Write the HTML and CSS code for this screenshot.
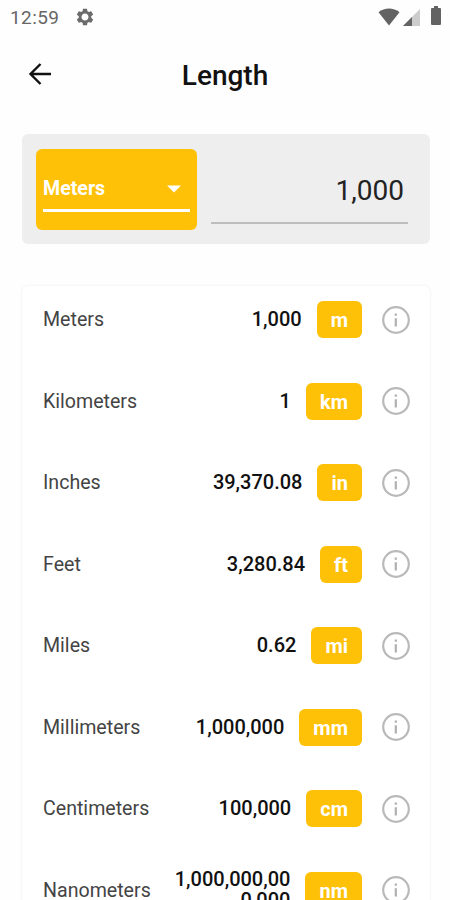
FILE: index.html
```html
<!DOCTYPE html>
<html lang="en">
  <head>
    <meta charset="UTF-8" />
    <meta name="viewport" content="width=device-width, initial-scale=1.0" />
    <title>Length</title>
    <link rel="stylesheet" href="styles.css">
  </head>
  <body>
    <!-- icon shared by every row -->
    <svg class="defs" width="0" height="0">
      <symbol id="info" viewBox="0 0 28 28">
        <circle cx="14" cy="14" r="12.8" fill="none" stroke="#b9b9b9" stroke-width="2.2" />
        <path d="M12.700 12.200h2.200v8.200h-2.200zM12.700 7.600h2.200v2.200h-2.200z" fill="#b0b0b0" />
      </symbol>
    </svg>

    <div class="status-bar">
      <span class="clock">12:59</span>
      <svg class="gear" width="20" height="20" viewBox="0 0 24 24">
        <path fill="#6b6b6b" fill-rule="evenodd" d="M19.43 12.98c.04-.32.07-.64.07-.98s-.03-.66-.07-.98l2.11-1.65c.19-.15.24-.42.12-.64l-2-3.46c-.12-.22-.39-.3-.61-.22l-2.49 1c-.52-.4-1.08-.73-1.69-.98l-.38-2.65C14.46 2.18 14.25 2 14 2h-4c-.25 0-.46.18-.49.42l-.38 2.65c-.61.25-1.17.59-1.69.98l-2.49-1c-.23-.09-.49 0-.61.22l-2 3.46c-.13.22-.07.49.12.64l2.11 1.65c-.04.32-.07.65-.07.98s.03.66.07.98l-2.11 1.65c-.19.15-.24.42-.12.64l2 3.46c.12.22.39.3.61.22l2.49-1c.52.4 1.08.73 1.69.98l.38 2.65c.03.24.24.42.49.42h4c.25 0 .46-.18.49-.42l.38-2.65c.61-.25 1.17-.59 1.69-.98l2.49 1c.23.09.49 0 .61-.22l2-3.46c.12-.22.07-.49-.12-.64l-2.11-1.65zM12 16.2c-2.300 0-4.200-1.900-4.200-4.200s1.900-4.200 4.200-4.200 4.200 1.900 4.200 4.200-1.900 4.200-4.200 4.200z" />
      </svg>
      <svg class="wifi" width="22" height="18" viewBox="0 0 22 18">
        <path fill="#636363" d="M0.500 4.200C6.500-.6 15.500-.6 21.500 4.200L11 17.500z" />
      </svg>
      <svg class="signal" width="17" height="17" viewBox="0 0 17 17">
        <path fill="#cccccc" d="M17 0v17H0z" />
        <path fill="#636363" d="M9 8v9H0z" />
      </svg>
      <svg class="battery" width="10" height="19" viewBox="0 0 10 19">
        <path fill="#636363" d="M3 0h4v2h2q1 0 1 1v15q0 1-1 1H1q-1 0-1-1V3q0-1 1-1h2z" />
      </svg>
    </div>

    <div class="top-bar">
      <svg class="back" width="24" height="24" viewBox="0 0 24 24">
        <path d="M23 12H3M12.500 2L2.500 12L12.500 22" fill="none" stroke="#111" stroke-width="2.400" />
      </svg>
      <h1>Length</h1>
    </div>

    <div class="input-panel">
      <div class="unit-select">
        <div class="unit-field">
          <span>Meters</span>
          <svg width="14" height="8" viewBox="0 0 14 8">
            <path d="M0 0.500h14L7 7.500z" fill="#fff" />
          </svg>
        </div>
      </div>
      <div class="amount">1,000</div>
    </div>

    <ul class="results">
      <li>
        <span class="name">Meters</span>
        <span class="value">1,000</span>
        <span class="badge">m</span>
        <svg class="info"><use href="#info" /></svg>
      </li>
      <li>
        <span class="name">Kilometers</span>
        <span class="value">1</span>
        <span class="badge">km</span>
        <svg class="info"><use href="#info" /></svg>
      </li>
      <li>
        <span class="name">Inches</span>
        <span class="value">39,370.08</span>
        <span class="badge">in</span>
        <svg class="info"><use href="#info" /></svg>
      </li>
      <li>
        <span class="name">Feet</span>
        <span class="value">3,280.84</span>
        <span class="badge">ft</span>
        <svg class="info"><use href="#info" /></svg>
      </li>
      <li>
        <span class="name">Miles</span>
        <span class="value">0.62</span>
        <span class="badge">mi</span>
        <svg class="info"><use href="#info" /></svg>
      </li>
      <li>
        <span class="name">Millimeters</span>
        <span class="value">1,000,000</span>
        <span class="badge">mm</span>
        <svg class="info"><use href="#info" /></svg>
      </li>
      <li>
        <span class="name">Centimeters</span>
        <span class="value">100,000</span>
        <span class="badge">cm</span>
        <svg class="info"><use href="#info" /></svg>
      </li>
      <li>
        <span class="name">Nanometers</span>
        <span class="value">1,000,000,000,000</span>
        <span class="badge">nm</span>
        <svg class="info"><use href="#info" /></svg>
      </li>
    </ul>
  </body>
</html>
```
FILE: styles.css
```css
* {
  box-sizing: border-box;
}

body {
  margin: 0;
  height: 900px;
  overflow: hidden;
  display: flex;
  flex-direction: column;
  background: #fefefe;
  font-family: Roboto, "Liberation Sans", sans-serif;
}

svg {
  flex: none;
}

.defs {
  position: absolute;
}

/* Status bar */
.status-bar {
  flex: none;
  height: 35px;
  padding: 0 9px 0 10px;
  display: flex;
  align-items: center;
}

.clock {
  width: 65px;
  font-size: 19px;
  letter-spacing: 0.4px;
  color: #666;
}

.gear {
  margin-top: -1px;
}

.wifi {
  margin-left: auto;
  margin-top: -2px;
}

.signal {
  margin-left: 3px;
}

.battery {
  margin-left: 11px;
  margin-top: -4px;
}

/* Top bar */
.top-bar {
  flex: none;
  height: 79px;
  padding: 0 28px;
  display: grid;
  grid-template-columns: 24px 1fr 24px;
  align-items: center;
}

.back {
  margin-top: -2px;
}

.top-bar h1 {
  margin: 1px 0 0;
  text-align: center;
  font-size: 28px;
  font-weight: 500;
  color: #111;
}

/* Value input */
.input-panel {
  flex: none;
  height: 110px;
  margin: 20px 20px 0 22px;
  padding: 14.5px 22px 14.5px 14px;
  display: flex;
  gap: 14px;
  background: #eee;
  border-radius: 6px;
}

.unit-select {
  width: 161px;
  padding: 0 7px;
  background: #ffc107;
  border-radius: 6px;
}

.unit-field {
  height: 63px;
  padding: 20px 9px 0 0;
  display: flex;
  align-items: center;
  justify-content: space-between;
  border-bottom: 3px solid #fff;
  font-size: 19.6px;
  font-weight: 700;
  color: #fff;
}

.amount {
  flex: 1;
  height: 75px;
  padding: 24px 4px 0 0;
  border-bottom: 2px solid #bdbdbd;
  text-align: right;
  font-size: 28px;
  line-height: 35px;
  color: #222;
}

/* Converted values */
.results {
  flex: none;
  height: 640px;
  margin: 42px 20px 0 22px;
  padding: 15px 20px 0 21px;
  display: flex;
  flex-direction: column;
  gap: 44.57px;
  list-style: none;
  background: #fff;
  border-radius: 6px;
  box-shadow: 0 0 3px rgba(0, 0, 0, 0.08);
}

.results li {
  flex: none;
  height: 37px;
  display: flex;
  align-items: center;
}

.name {
  width: 127px;
  flex: none;
  font-size: 19.6px;
  color: #444;
}

.value {
  flex: 1;
  min-width: 0;
  text-align: right;
  font-size: 20px;
  font-weight: 500;
  line-height: 21px;
  word-break: break-all;
  color: #111;
}

.badge {
  height: 37px;
  margin: 0 20px 0 15px;
  padding: 0 14px;
  background: #ffc107;
  border-radius: 6px;
  font-size: 20px;
  font-weight: 700;
  line-height: 38px;
  color: #fff;
}

.info {
  width: 28px;
  height: 28px;
}
```
